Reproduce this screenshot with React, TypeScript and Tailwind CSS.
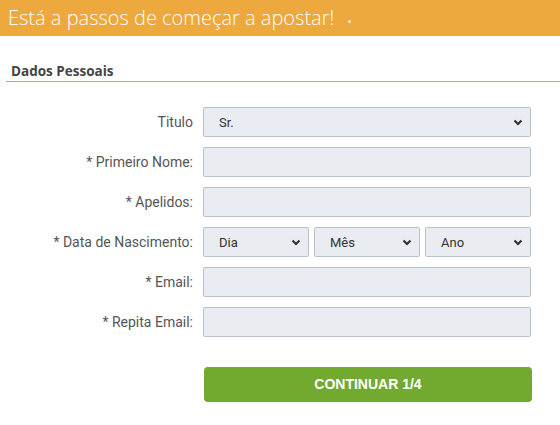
import { ReactNode } from "react";

function Chevron() {
  return (
    <svg width="10" height="7" viewBox="0 0 10 7" className="shrink-0">
      <path d="M1.5 1.5 L5 5 L8.5 1.5" fill="none" stroke="#333" strokeWidth="2.2" />
    </svg>
  );
}

function SelectBox({ value, className = "" }: { value: string; className?: string }) {
  return (
    <div
      className={`flex h-[30px] items-center justify-between rounded-[2px] border border-[#b9c1cc] bg-[#e9ecf1] pl-[15px] pr-[7px] text-[13px] text-[#333] ${className}`}
    >
      <span className="pt-[2px]">{value}</span>
      <Chevron />
    </div>
  );
}

function InputBox() {
  return <div className="h-[30px] w-full rounded-[2px] border border-[#b9c1cc] bg-[#e9ecf1]" />;
}

function Row({ label, children }: { label: string; children: ReactNode }) {
  return (
    <div className="flex items-center">
      <label className="w-[193px] text-right text-[14px] text-[#555]">{label}</label>
      <div className="ml-[10px] w-[328px]">{children}</div>
    </div>
  );
}

export default function App() {
  return (
    <div className="h-[425px] w-[560px] bg-white" style={{ fontFamily: "Roboto, Arial, sans-serif" }}>
      <div
        className="flex h-[36px] items-center bg-[#eda83e] pl-[8px] text-[20px] font-light text-white"
        style={{ fontFamily: '"Open Sans", sans-serif' }}
      >
        <span>Está a passos de começar a apostar!</span>
        <span className="ml-[14px] mt-[6px] h-[3px] w-[3px] rounded-full bg-white/80" />
      </div>

      <div className="ml-[6px] mt-[27px] border-b border-[#e8a341] pb-[2px] pl-[5px]">
        <h2
          className="text-[13.5px] font-bold leading-[16px] text-[#444]"
          style={{ fontFamily: '"Open Sans", sans-serif' }}
        >
          Dados Pessoais
        </h2>
      </div>

      <div className="mt-[25px] flex flex-col gap-[10px]">
        <Row label="Titulo">
          <SelectBox value="Sr." className="w-full" />
        </Row>
        <Row label="* Primeiro Nome:">
          <InputBox />
        </Row>
        <Row label="* Apelidos:">
          <InputBox />
        </Row>
        <Row label="* Data de Nascimento:">
          <div className="flex gap-[5px]">
            <SelectBox value="Dia" className="flex-1" />
            <SelectBox value="Mês" className="flex-1" />
            <SelectBox value="Ano" className="flex-1" />
          </div>
        </Row>
        <Row label="* Email:">
          <InputBox />
        </Row>
        <Row label="* Repita Email:">
          <InputBox />
        </Row>
      </div>

      <div className="ml-[204px] mt-[30px] w-[328px]">
        <button
          className="h-[35px] w-full rounded-[4px] bg-[#72aa2f] text-[14px] font-bold text-white"
          style={{ fontFamily: '"Liberation Sans", Arial, sans-serif' }}
        >
          CONTINUAR 1/4
        </button>
      </div>
    </div>
  );
}
